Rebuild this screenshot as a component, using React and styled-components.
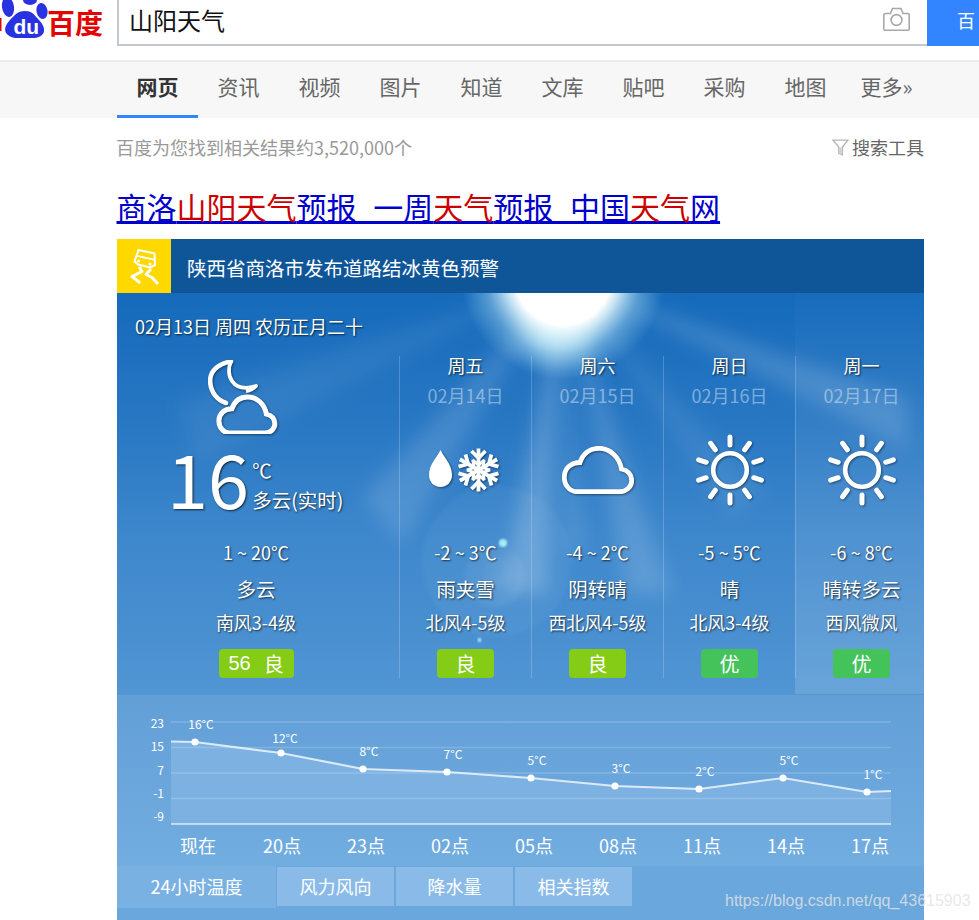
import React from 'react';
import styled, { createGlobalStyle } from 'styled-components';

const CJK = `"Noto Sans CJK SC", "Noto Sans", sans-serif`;
const TEXT_SHADOW = '1px 1px 2px rgba(0, 0, 0, 0.7)';

const Global = createGlobalStyle`
  html, body { margin: 0; padding: 0; background: #fff; overflow: hidden; }
  body { font-family: ${CJK}; width: 979px; height: 920px; }
  * { box-sizing: border-box; }
`;

const Page = styled.div`
  position: relative;
  width: 979px;
  height: 920px;
  overflow: hidden;
`;

const Header = styled.header`
  display: flex;
  height: 46px;
  margin-bottom: 14px;
`;
const LogoWrap = styled.div`
  display: flex;
  width: 117px;
  height: 46px;
  align-items: flex-start;
`;
const LogoWord = styled.span`
  margin-left: -1px;
  padding-top: 2px;
  color: #e10601;
  font-size: 28px;
  line-height: 40px;
  font-weight: 700;
  white-space: nowrap;
`;
const SearchBox = styled.div`
  flex: 1;
  display: flex;
  align-items: center;
  justify-content: space-between;
  height: 46px;
  padding: 0 17px 6px 10px;
  border-left: 2px solid #c4c7ce;
  border-bottom: 2px solid #c4c7ce;
  color: #111;
  font-size: 24px;
`;
const SearchButton = styled.div`
  width: 52px;
  height: 46px;
  padding: 0 0 0 30px;
  background: #3385ff;
  color: #fff;
  font-size: 18px;
  line-height: 40px;
  white-space: nowrap;
`;

const Nav = styled.nav`
  display: flex;
  height: 58px;
  padding-left: 117px;
  border-top: 2px solid #ebebeb;
  background: #f7f7f7;
`;
const NavTab = styled.div`
  width: 81px;
  height: 56px;
  padding-top: 8px;
  text-align: center;
  font-size: 21px;
  line-height: 32px;
  white-space: nowrap;
  color: ${p => (p.$active ? '#333' : '#666')};
  font-weight: ${p => (p.$active ? 700 : 400)};
  border-bottom: 3px solid ${p => (p.$active ? '#3385ff' : 'transparent')};
`;

const InfoRow = styled.div`
  display: flex;
  justify-content: space-between;
  width: 807px;
  height: 60px;
  margin-left: 116px;
  padding-top: 16px;
  font-size: 18px;
  line-height: 26px;
  color: #999;
`;
const Tools = styled.div`
  display: flex;
  align-items: center;
  height: 26px;
  gap: 3px;
  margin-right: -1px;
  color: #666;
`;

const Title = styled.a`
  display: block;
  height: 61px;
  margin-left: 116.5px;
  font-size: 30px;
  line-height: 56px;
  color: #0000cc;
  text-decoration: underline;
  text-decoration-thickness: 3px;
  text-decoration-skip-ink: none;
  white-space: nowrap;
  em { font-style: normal; color: #cc0000; }
`;

const Card = styled.section`
  width: 807px;
  margin-left: 117px;
  color: #fff;
`;
const Alert = styled.div`
  display: flex;
  align-items: center;
  height: 54px;
  background: #0f5699;
`;
const AlertIcon = styled.div`
  display: flex;
  width: 54px;
  height: 54px;
  margin-right: 16px;
  background: #ffd800;
`;
const AlertText = styled.div`
  padding-top: 4px;
  font-size: 19.5px;
  line-height: 28px;
`;

const Forecast = styled.div`
  position: relative;
  display: grid;
  grid-template-columns: 282px 132px 132px 132px 129px;
  height: 402px;
  overflow: hidden;
  background: linear-gradient(180deg, #156abb 0%, #2877c3 32%, #3d87cc 60%, #5195d3 100%);
  border-bottom: 1px solid #5596d4;
`;
const Sky = styled.svg`
  position: absolute;
  inset: 0;
  width: 807px;
  height: 402px;
`;

const NowCol = styled.div`
  position: relative;
  display: flex;
  flex-direction: column;
  padding: 25px 4px 0 0;
`;
const DateLine = styled.div`
  padding-left: 18px;
  height: 20px;
  font-size: 18px;
  line-height: 16px;
  white-space: nowrap;
  text-shadow: ${TEXT_SHADOW};
`;
const NowTop = styled.div`
  display: flex;
  flex-direction: column;
  height: 203px;
  padding-top: 22px;
`;
const NowIcon = styled.div`
  display: flex;
  justify-content: center;
  padding-right: 26px;
  height: 74px;
`;
const NowTemp = styled.div`
  display: flex;
  padding: 3px 0 0 50px;
`;
const BigNumber = styled.div`
  font-size: 74px;
  line-height: 80px;
  text-shadow: ${TEXT_SHADOW};
`;
const NowSide = styled.div`
  display: flex;
  flex-direction: column;
  padding: 18px 0 0 3px;
  font-size: 19.5px;
  line-height: 30px;
  text-shadow: ${TEXT_SHADOW};
  white-space: nowrap;
`;

const DayCol = styled.div`
  position: relative;
  padding: 63px 0 17px;
  background: ${p => (p.$last ? 'linear-gradient(180deg, rgba(255,255,255,0.01), rgba(255,255,255,0.14))' : 'none')};
`;
const DayInner = styled.div`
  display: flex;
  flex-direction: column;
  width: 132px;
  height: 322px;
  border-left: 1px solid rgba(255, 255, 255, 0.2);
`;
const DayTop = styled.div`
  display: flex;
  flex-direction: column;
  align-items: center;
  height: 185px;
`;
const DayName = styled.div`
  height: 20px;
  font-size: 18px;
  line-height: 18px;
  text-shadow: ${TEXT_SHADOW};
`;
const DayDate = styled.div`
  height: 20px;
  margin-top: 10px;
  font-size: 18px;
  line-height: 18px;
  color: rgba(255, 255, 255, 0.42);
`;
const DayIcon = styled.div`
  display: flex;
  align-items: center;
  justify-content: center;
  height: 80px;
  margin-top: 24px;
`;
const Details = styled.div`
  display: flex;
  flex-direction: column;
  align-items: center;
  text-shadow: ${TEXT_SHADOW};
  white-space: nowrap;
`;
const Range = styled.div`
  height: 24px;
  font-size: 18px;
  line-height: 22px;
`;
const Desc = styled.div`
  height: 24px;
  margin-top: 12px;
  font-size: 19.5px;
  line-height: 23px;
`;
const Wind = styled.div`
  height: 24px;
  margin-top: 10px;
  font-size: 18px;
  line-height: 22px;
`;
const Badge = styled.div`
  display: flex;
  align-items: center;
  justify-content: center;
  gap: 13px;
  width: ${p => (p.$wide ? 75 : 57)}px;
  height: 29px;
  margin-top: 14px;
  border-radius: 4px;
  background: ${p => (p.$good ? '#43c35a' : '#84cc16')};
  font-size: 20px;
  line-height: 29px;
  text-shadow: none;
  b { font-family: "Liberation Sans", sans-serif; font-weight: 400; }
`;

const ChartArea = styled.div`
  height: 171px;
  background: linear-gradient(180deg, #629fd7 0%, #72ade0 100%);
`;
const ChartSvg = styled.svg`
  display: block;
  width: 807px;
  height: 136px;
  text { font-family: ${CJK}; font-size: 12px; fill: #fff; }
`;
const Hours = styled.div`
  display: grid;
  grid-template-columns: repeat(9, 84px);
  height: 35px;
  padding-left: 39px;
  font-size: 18px;
  line-height: 28px;
  text-align: center;
`;
const TabBar = styled.div`
  display: flex;
  gap: 2px;
  height: 54px;
  background: #69a7dd;
  font-size: 18px;
  align-items: flex-start;
`;
const Tab = styled.div`
  display: flex;
  align-items: center;
  justify-content: center;
  width: ${p => (p.$active ? 159 : 117)}px;
  height: ${p => (p.$active ? 42 : 39)}px;
  padding-bottom: 2px;
  margin-right: ${p => (p.$active ? -1 : 0)}px;
  margin-top: ${p => (p.$active ? 0 : 1)}px;
  background: ${p => (p.$active ? '#79b1e3' : '#8abbe8')};
`;

const Watermark = styled.div`
  position: absolute;
  left: 725px;
  top: 891px;
  font-family: "Liberation Sans", sans-serif;
  font-size: 16px;
  line-height: 20px;
  color: rgba(227, 227, 227, 0.82);
  white-space: nowrap;
`;

const Shadow = { filter: 'drop-shadow(1px 1px 1px rgba(0,0,0,0.45))' };

const CloudPath = 'M15 45.7H58C64 45.7 69.7 41 69.7 34.5C69.7 28.5 65.5 24.5 59.5 23C57.5 11 48 2.3 37 2.3C28 2.3 21 7.5 18 16.5C9 16.5 2.3 22.5 2.3 31C2.3 39.5 8 45.7 15 45.7Z';

const Logo = () => (
  <svg width="48" height="46" viewBox="0 0 48 46">
    <rect x="0" y="18" width="1.5" height="13" fill="#e10601" />
    <ellipse cx="8" cy="7" rx="6" ry="10" fill="#2932e1" transform="rotate(-8 8 7)" />
    <ellipse cx="30" cy="0" rx="7" ry="5" fill="#2932e1" />
    <ellipse cx="42" cy="11" rx="5.5" ry="8" fill="#2932e1" transform="rotate(-10 42 11)" />
    <path d="M25 11C33 11 35 16 39 20C44 25 46 31 42 35C38 39 32 38 25 38C18 38 12 39 8 35C3 31 5 25 10 20C14 16 17 11 25 11Z" fill="#2932e1" />
    <text x="13.5" y="34" fontFamily="Liberation Sans, sans-serif" fontWeight="700" fontSize="21" fill="#fff">du</text>
  </svg>
);

const CameraIcon = () => (
  <svg width="27" height="24" viewBox="0 0 27 24" fill="none" stroke="#a8a8a8" strokeWidth="1.6">
    <path d="M2.5 6.5H7.5L9.5 1.5H18L20 6.5H25C25.8 6.5 26.2 7 26.2 7.8V22C26.2 22.7 25.8 23.2 25 23.2H2C1.3 23.2 0.8 22.7 0.8 22V7.8C0.8 7 1.4 6.5 2.5 6.5Z" />
    <circle cx="13.5" cy="13" r="5.4" />
  </svg>
);

const FunnelIcon = () => (
  <svg width="17" height="17" viewBox="0 0 17 17" fill="none" stroke="#b5b5b5" strokeWidth="1.3">
    <path d="M1 1.2H16L10.4 8V15.8L6.8 14.3V8Z" />
    <path d="M8.4 8.5V14" stroke="#ccc" strokeWidth="2" />
  </svg>
);

const SkidIcon = () => (
  <svg width="54" height="54" viewBox="0 0 54 54" fill="none" stroke="#fff" strokeLinejoin="round" strokeLinecap="square">
    <path d="M21.5 11L37.5 14.5L38 26L33 28.5L21 25.5L17.5 22.5Z" strokeWidth="2" />
    <path d="M20 17L36.5 20.5" strokeWidth="1.8" />
    <circle cx="21.5" cy="22" r="1.5" fill="#fff" stroke="none" />
    <circle cx="33" cy="25" r="1.5" fill="#fff" stroke="none" />
    <path d="M23 29L25 32.5L15 37.5L22 43" strokeWidth="3" />
    <path d="M33 31L29 35.5L35 38.5L40 44" strokeWidth="3" />
  </svg>
);

const MoonCloud = () => (
  <svg width="70" height="74" viewBox="0 0 70 74" style={Shadow} fill="none" stroke="#fff">
    <path d="M23 1.5C9 4 1.5 12 2.2 22C2.7 32 9 40 18 43" strokeWidth="4.6" strokeLinecap="round" />
    <path d="M23 1.5C17 14 24 34 48 26C45 29.5 42 30.5 38 31" strokeWidth="3.8" strokeLinejoin="round" />
    <g transform="translate(9 35) scale(0.83)">
      <path d={CloudPath} strokeWidth="6" fill="none" />
    </g>
  </svg>
);

const CloudIcon = () => (
  <svg width="72" height="48" viewBox="0 0 72 48" style={Shadow} fill="none" stroke="#fff" strokeWidth="4.8">
    <path d={CloudPath} />
  </svg>
);

const SunIcon = () => {
  const rays = Array.from({ length: 10 }, (_, i) => (i * 36 * Math.PI) / 180);
  return (
    <svg width="72" height="72" viewBox="-36 -36 72 72" style={Shadow} fill="none" stroke="#fff">
      <circle r="16.8" strokeWidth="4.6" />
      {rays.map((a, i) => (
        <line
          key={i}
          x1={Math.sin(a) * 25}
          y1={-Math.cos(a) * 25}
          x2={Math.sin(a) * 33}
          y2={-Math.cos(a) * 33}
          strokeWidth="5"
          strokeLinecap="round"
        />
      ))}
    </svg>
  );
};

const SleetIcon = () => {
  const arms = [0, 60, 120, 180, 240, 300];
  return (
    <svg width="76" height="46" viewBox="0 0 76 46" style={Shadow}>
      <path d="M12.5 3C15 9 24 17 24 28C24 35 19 40 12.5 40C6 40 1 35 1 28C1 17 10 9 12.5 3Z" fill="#fff" />
      <g transform="translate(50.5 23)" fill="none" stroke="#fff" strokeWidth="3.8" strokeLinejoin="miter">
        {arms.map(a => (
          <g key={a} transform={`rotate(${a})`}>
            <path d="M0 0V-21.5" />
            <path d="M-7 -19L0 -12L7 -19" />
            <path d="M-6 -10L0 -5L6 -10" strokeWidth="3" />
          </g>
        ))}
      </g>
    </svg>
  );
};

const SkyArt = () => {
  const sx = 446;
  const sy = -16;
  const rays = [
    [385, 300, 430, 300, 0.2],
    [245, 205, 285, 250, 0.12],
    [60, 110, 80, 170, 0.06],
    [510, 300, 555, 300, 0.14],
    [615, 225, 645, 200, 0.07],
    [790, 105, 790, 155, 0.14],
    [445, 260, 470, 260, 0.09]
  ];
  return (
    <Sky viewBox="0 0 807 402" aria-hidden="true">
      <defs>
        <filter id="soft" x="-30%" y="-30%" width="160%" height="160%"><feGaussianBlur stdDeviation="9" /></filter>
        <filter id="softer" x="-50%" y="-50%" width="200%" height="200%"><feGaussianBlur stdDeviation="12" /></filter>
        <filter id="edge" x="-10%" y="-10%" width="120%" height="120%"><feGaussianBlur stdDeviation="2" /></filter>
        <filter id="dot"><feGaussianBlur stdDeviation="1.3" /></filter>
        <radialGradient id="glow" cx="50%" cy="50%" r="50%">
          <stop offset="0%" stopColor="#fff" stopOpacity="1" />
          <stop offset="47%" stopColor="#fff" stopOpacity="1" />
          <stop offset="56%" stopColor="#e4f7fc" stopOpacity="0.85" />
          <stop offset="76%" stopColor="#b4e3f5" stopOpacity="0.38" />
          <stop offset="100%" stopColor="#a9dcf2" stopOpacity="0" />
        </radialGradient>
      </defs>
      <g filter="url(#soft)">
        {rays.map((r, i) => (
          <polygon key={i} points={`${sx},${sy} ${r[0]},${r[1]} ${r[2]},${r[3]}`} fill="#fff" opacity={r[4]} />
        ))}
      </g>
      <ellipse cx={sx - 5} cy="42" rx="32" ry="22" fill="#c8f0fa" opacity="0.85" filter="url(#softer)" />
      <circle cx={sx} cy={sy} r="102" fill="url(#glow)" />
      <circle cx={sx} cy={sy} r="48" fill="#fff" />
      <g filter="url(#edge)">
        <circle cx="380" cy="268" r="75" fill="#fff" opacity="0.04" />
        <circle cx="378" cy="284" r="30" fill="#fff" opacity="0.06" />
        <circle cx="381" cy="279" r="15" fill="#fff" opacity="0.04" />
      </g>
      <circle cx="386" cy="250" r="4" fill="#a8ecf5" filter="url(#dot)" />
      <circle cx="362.5" cy="347" r="2" fill="#a8ecf5" filter="url(#dot)" />
    </Sky>
  );
};

const days = [
  { name: '周五', date: '02月14日', icon: <SleetIcon />, range: '-2 ~ 3℃', desc: '雨夹雪', wind: '北风4-5级', air: '良' },
  { name: '周六', date: '02月15日', icon: <CloudIcon />, range: '-4 ~ 2℃', desc: '阴转晴', wind: '西北风4-5级', air: '良' },
  { name: '周日', date: '02月16日', icon: <SunIcon />, range: '-5 ~ 5℃', desc: '晴', wind: '北风3-4级', air: '优' },
  { name: '周一', date: '02月17日', icon: <SunIcon />, range: '-6 ~ 8℃', desc: '晴转多云', wind: '西风微风', air: '优' }
];

const navs = ['网页', '资讯', '视频', '图片', '知道', '文库', '贴吧', '采购', '地图', '更多»'];

const TOP = 695;
const points = [
  [195, 742, '16°C', 6, -13], [281, 753, '12°C', 4, -10.5], [363, 769, '8°C', 6, -13], [447, 772, '7°C', 6, -13], [531, 778, '5°C', 6, -13],
  [615, 786, '3°C', 6, -13], [699, 789, '2°C', 6, -13], [783, 778, '5°C', 6, -13], [867, 792, '1°C', 6, -13]
].map(([x, y, t, dx, dy]) => ({ x: x - 117, y: y - TOP, t, dx, dy }));

const grid = [722, 747.5, 773, 798.5].map(y => y - TOP);
const yLabels = [['23', 723], ['15', 746], ['7', 770], ['-1', 793], ['-9', 816]];
const hours = ['现在', '20点', '23点', '02点', '05点', '08点', '11点', '14点', '17点'];

const Chart = () => {
  const line = `54,46.5 ${points.map(p => `${p.x},${p.y}`).join(' ')} 774,96`;
  return (
    <ChartSvg viewBox="0 0 807 136">
      <polygon points={`${line} 774,129 54,129`} fill="#7db1e2" />
      {grid.map(y => (
        <line key={y} x1="54" x2="774" y1={y} y2={y} stroke="rgba(255,255,255,0.18)" strokeWidth="1.5" />
      ))}
      <line x1="54" x2="774" y1="129" y2="129" stroke="rgba(255,255,255,0.75)" strokeWidth="1.3" />
      <polyline points={line} fill="none" stroke="rgba(255,255,255,0.75)" strokeWidth="2.2" />
      {points.map(p => (
        <React.Fragment key={p.x}>
          <circle cx={p.x} cy={p.y} r="3.6" fill="#fff" />
          <text x={p.x + p.dx} y={p.y + p.dy} textAnchor="middle">{p.t}</text>
        </React.Fragment>
      ))}
      {yLabels.map(([t, y]) => (
        <text key={t} x="47" y={y - TOP + 4.5} textAnchor="end">{t}</text>
      ))}
    </ChartSvg>
  );
};

const Bottom = ({ range, desc, wind, children }) => (
  <Details>
    <Range>{range}</Range>
    <Desc>{desc}</Desc>
    <Wind>{wind}</Wind>
    {children}
  </Details>
);

export default function App() {
  return (
    <Page>
      <Global />
      <Header>
        <LogoWrap>
          <Logo />
          <LogoWord>百度</LogoWord>
        </LogoWrap>
        <SearchBox>
          <span>山阳天气</span>
          <CameraIcon />
        </SearchBox>
        <SearchButton>百</SearchButton>
      </Header>
      <Nav>
        {navs.map((n, i) => (
          <NavTab key={n} $active={i === 0}>{n}</NavTab>
        ))}
      </Nav>
      <InfoRow>
        <span>百度为您找到相关结果约3,520,000个</span>
        <Tools><FunnelIcon />搜索工具</Tools>
      </InfoRow>
      <Title href="#">商洛<em>山阳天气</em>预报_一周<em>天气</em>预报_中国<em>天气</em>网</Title>
      <Card>
        <Alert>
          <AlertIcon><SkidIcon /></AlertIcon>
          <AlertText>陕西省商洛市发布道路结冰黄色预警</AlertText>
        </Alert>
        <Forecast>
          <SkyArt />
          <NowCol>
            <DateLine>02月13日 周四 农历正月二十</DateLine>
            <NowTop>
              <NowIcon><MoonCloud /></NowIcon>
              <NowTemp>
                <BigNumber>16</BigNumber>
                <NowSide>
                  <span>℃</span>
                  <span>多云(实时)</span>
                </NowSide>
              </NowTemp>
            </NowTop>
            <Bottom range="1 ~ 20℃" desc="多云" wind="南风3-4级">
              <Badge $wide><b>56</b><span>良</span></Badge>
            </Bottom>
          </NowCol>
          {days.map((d, i) => (
            <DayCol key={d.name} $last={i === 3}>
              <DayInner>
                <DayTop>
                  <DayName>{d.name}</DayName>
                  <DayDate>{d.date}</DayDate>
                  <DayIcon>{d.icon}</DayIcon>
                </DayTop>
                <Bottom range={d.range} desc={d.desc} wind={d.wind}>
                  <Badge $good={d.air === '优'}>{d.air}</Badge>
                </Bottom>
              </DayInner>
            </DayCol>
          ))}
        </Forecast>
        <ChartArea>
          <Chart />
          <Hours>
            {hours.map(h => <span key={h}>{h}</span>)}
          </Hours>
        </ChartArea>
        <TabBar>
          <Tab $active>24小时温度</Tab>
          <Tab>风力风向</Tab>
          <Tab>降水量</Tab>
          <Tab>相关指数</Tab>
        </TabBar>
      </Card>
      <Watermark>https://blog.csdn.net/qq_43615903</Watermark>
    </Page>
  );
}
